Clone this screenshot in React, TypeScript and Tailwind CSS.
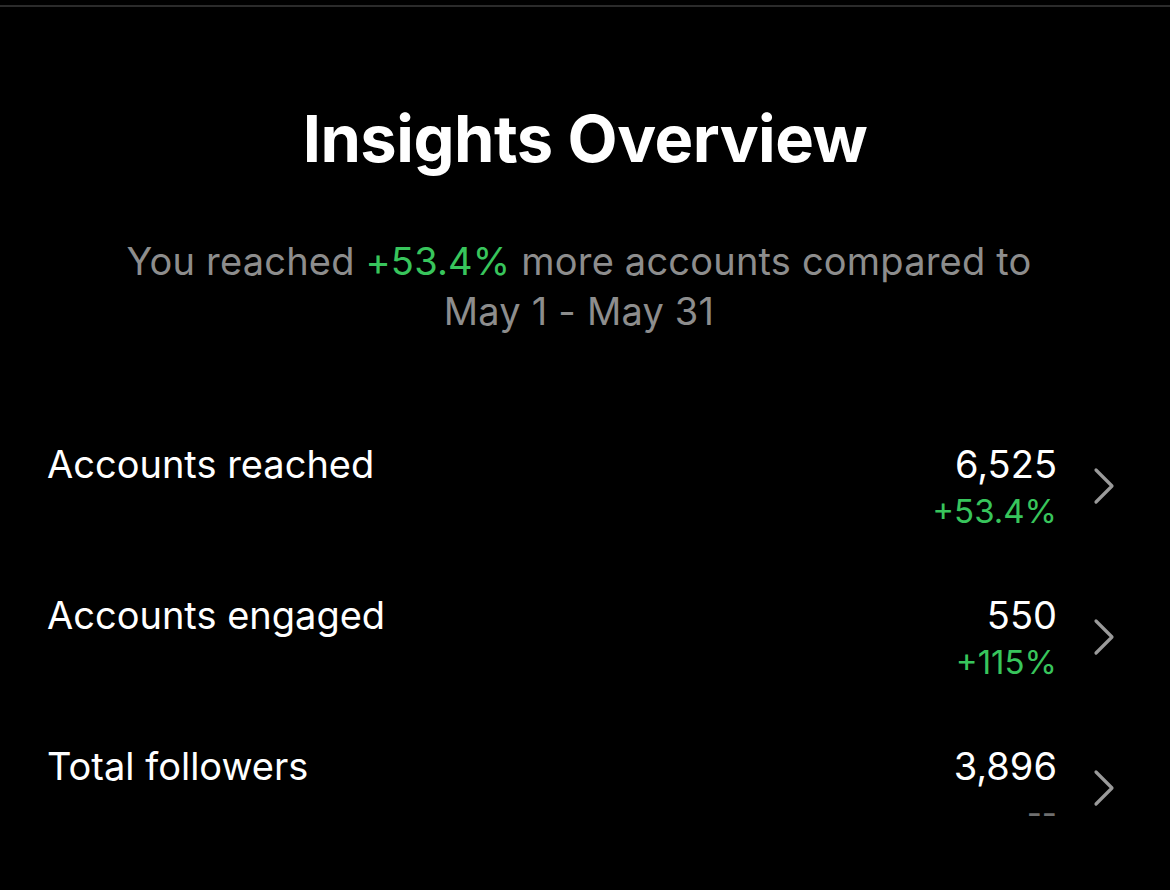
const rows = [
  { label: 'Accounts reached', value: '6,525', change: '+53.4%' },
  { label: 'Accounts engaged', value: '550', change: '+115%' },
  { label: 'Total followers', value: '3,896', change: null },
];

const Chevron = () => (
  <svg width="22" height="38" viewBox="0 0 22 38" fill="none" className="shrink-0">
    <path d="M3 3 L19 19 L3 35" stroke="#9a9a9a" strokeWidth="3.2" strokeLinecap="round" strokeLinejoin="round" />
  </svg>
);

export default function App() {
  return (
    <div className="w-[1170px] h-[890px] bg-black overflow-hidden font-['Inter',sans-serif] text-white">
      <div className="mt-[5px] h-[2px] bg-[#2b2b2b]" />

      <h1 className="mt-[92px] text-center text-[65px] leading-[80px] font-bold tracking-[-0.5px]">
        Insights Overview
      </h1>

      <p className="mt-[57px] pl-[70px] pr-[82px] text-center text-[38px] leading-[50px] tracking-[0.2px] text-[#8d8d8d]">
        You reached <span className="text-[#38c55c]">+53.4%</span> more accounts compared to
        <br />
        May 1 - May 31
      </p>

      <div className="mt-[107px] flex flex-col gap-[65px]">
        {rows.map((row) => (
          <div key={row.label} className="flex items-start pl-[47px] pr-[55px]">
            <span className="flex-1 text-[38px] leading-[42px]">{row.label}</span>
            <div className="flex items-center gap-[36px]">
              <div className="flex flex-col items-end">
                <span className="text-[38px] leading-[42px]">{row.value}</span>
                <span className={`mt-[8px] text-[33px] leading-[36px] ${row.change ? 'text-[#38c55c]' : 'text-[#6f6f6f]'}`}>
                  {row.change ?? '--'}
                </span>
              </div>
              <Chevron />
            </div>
          </div>
        ))}
      </div>
    </div>
  );
}
